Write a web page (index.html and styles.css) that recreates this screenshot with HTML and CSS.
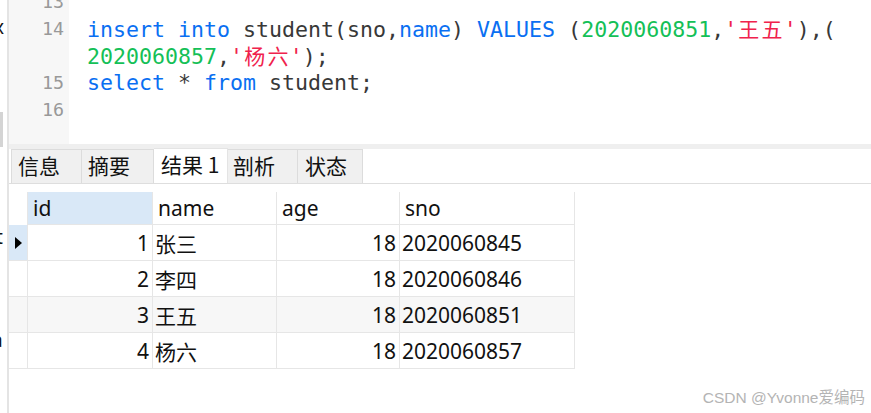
FILE: index.html
```html
<!DOCTYPE html>
<html lang="zh-CN">
<head>
<meta charset="utf-8">
<title>student</title>
<link rel="stylesheet" href="styles.css">
</head>
<body>
<div class="strip">
  <div class="frag frag-x">x</div>
  <div class="grip"></div>
  <div class="frag frag-t">t</div>
  <div class="frag frag-a">a</div>
</div>
<div class="main">
  <div class="editor">
    <div class="gutter">
      <div class="ln">13</div>
      <div class="ln">14</div>
      <div class="ln"></div>
      <div class="ln">15</div>
      <div class="ln">16</div>
    </div>
    <div class="code">
      <div class="cl"></div>
      <div class="cl"><span class="kw">insert</span> <span class="kw">into</span> student(sno,<span class="kw">name</span>) <span class="kw">VALUES</span> (<span class="num">2020060851</span>,<span class="str">'<span class="w2">王</span><span class="w2">五</span>'</span>),(</div>
      <div class="cl"><span class="num">2020060857</span>,<span class="str">'<span class="w2">杨</span><span class="w2">六</span>'</span>);</div>
      <div class="cl"><span class="kw">select</span> * <span class="kw">from</span> student;</div>
      <div class="cl"></div>
    </div>
  </div>
  <div class="sep"></div>
  <div class="tabs">
    <div class="tab t1">信息</div>
    <div class="tab t2">摘要</div>
    <div class="tab t3 active">结果 1</div>
    <div class="tab t4">剖析</div>
    <div class="tab t5">状态</div>
  </div>
  <div class="grid">
    <div class="hc ind-h"></div>
    <div class="hc sel">id</div>
    <div class="hc">name</div>
    <div class="hc">age</div>
    <div class="hc">sno</div>

    <div class="c ind cur"><svg width="8" height="12" viewBox="0 0 8 12"><polygon points="0,0 7,6 0,12" fill="#000"/></svg></div>
    <div class="c r">1</div>
    <div class="c">张三</div>
    <div class="c r">18</div>
    <div class="c">2020060845</div>

    <div class="c ind"></div>
    <div class="c r">2</div>
    <div class="c">李四</div>
    <div class="c r">18</div>
    <div class="c">2020060846</div>

    <div class="c ind alt"></div>
    <div class="c r alt">3</div>
    <div class="c alt">王五</div>
    <div class="c r alt">18</div>
    <div class="c alt">2020060851</div>

    <div class="c ind"></div>
    <div class="c r">4</div>
    <div class="c">杨六</div>
    <div class="c r">18</div>
    <div class="c">2020060857</div>
  </div>
</div>
<div class="watermark">CSDN @Yvonne爱编码</div>
</body>
</html>
```
FILE: styles.css
```css
html, body {
  margin: 0;
  padding: 0;
}
body {
  width: 871px;
  height: 413px;
  overflow: hidden;
  display: flex;
  position: relative;
  background: #fff;
}
.strip {
  width: 7px;
  flex: none;
  overflow: hidden;
  border-right: 2px solid #e4e4e4;
  display: flex;
  flex-direction: column;
  font: 19px "Noto Sans", sans-serif;
  color: #111;
}
.frag {
  height: 27px;
  line-height: 27px;
  margin-left: -6px;
}
.frag-x { margin-top: 14px; }
.grip {
  margin-top: 71px;
  height: 35px;
  width: 3px;
  background: #d4d4d4;
}
.frag-t { margin-top: 77px; margin-left: -4px; }
.frag-a { margin-top: 76px; margin-left: -8px; }

.main {
  flex: 1;
  display: flex;
  flex-direction: column;
  min-width: 0;
}
.editor {
  height: 144px;
  display: flex;
  overflow: hidden;
  flex: none;
}
.gutter {
  width: 55px;
  padding-right: 5px;
  background: #f7f7f7;
  flex: none;
}
.ln {
  height: 27px;
  line-height: 27px;
  text-align: right;
  font: 18.3px "DejaVu Sans Mono", monospace;
  line-height: 27px;
  color: #999;
}
.gutter .ln:first-child, .code .cl:first-child {
  margin-top: -12px;
}
.code {
  padding-left: 18px;
  font: 21.6px "DejaVu Sans Mono", "Noto Sans CJK SC", monospace;
  color: #383838;
}
.cl {
  height: 27px;
  line-height: 27px;
  white-space: pre;
}
.kw { color: #0a6ff2; }
.num { color: #14c057; }
.str { color: #f0224c; }
.w2 {
  display: inline-block;
  width: 2ch;
  text-align: center;
  font-family: "Noto Sans CJK SC", sans-serif;
  font-size: 21px;
}

.sep {
  height: 5px;
  background: #efefef;
  flex: none;
}
.tabs {
  height: 35px;
  box-sizing: border-box;
  border-bottom: 1px solid #dedede;
  display: flex;
  align-items: flex-end;
  padding-left: 2px;
  flex: none;
}
.tab {
  box-sizing: border-box;
  height: 34px;
  line-height: 32px;
  padding-left: 6px;
  background: #f0f0f0;
  border: 1px solid #dcdcdc;
  border-bottom: none;
  border-left: none;
  font: 21px "Noto Sans CJK SC", sans-serif;
  color: #111;
}
.t1 { width: 71px; border-left: 1px solid #dcdcdc; }
.t2 { width: 72px; }
.t3 { width: 74px; padding-left: 7px; }
.t4 { width: 70px; padding-left: 5px; }
.t5 { width: 65px; padding-left: 7px; }
.tab.active {
  background: #fff;
  height: 35px;
  border-color: #e4e4e4;
}

.grid {
  margin-top: 8px;
  display: grid;
  grid-template-columns: 19px 125px 124px 123px 175px;
  grid-auto-rows: 36px;
  grid-template-rows: 33px;
  font: 21px "Noto Sans", "Noto Sans CJK SC", sans-serif;
  color: #111;
}
.hc, .c {
  box-sizing: border-box;
  border-right: 1px solid #e6e6e6;
  border-bottom: 1px solid #e6e6e6;
  display: flex;
  align-items: center;
  white-space: nowrap;
  overflow: hidden;
}
.hc {
  padding-left: 5px;
  padding-bottom: 1px;
}
.hc.sel { background: #d9e8f7; }
.hc.ind-h {
  border-bottom: none;
  border-right: 1px solid #e6e6e6;
}
.c {
  padding-left: 2px;
  padding-right: 3px;
}
.c.r { justify-content: flex-end; }
.c.ind {
  padding: 0 0 0 6px;
}
.c.ind.cur { background: #d9e8f7; }
.alt { background: #f7f7f7; }

.watermark {
  position: absolute;
  right: 6px;
  bottom: 6px;
  font: 15.5px "Liberation Sans", "Noto Sans CJK SC", sans-serif;
  color: #b4b4b4;
}
```
